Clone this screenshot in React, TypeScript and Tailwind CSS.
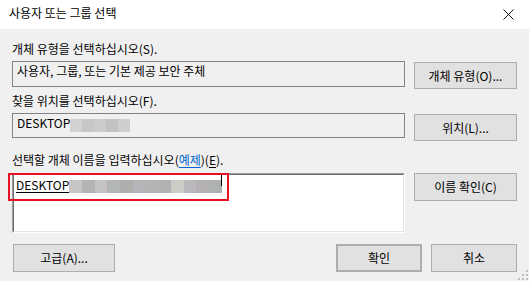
const boxTwoBlur = [
  "bg-[#d2d2d2]",
  "bg-[#c6c6c6]",
  "bg-[#cbcbcb]",
  "bg-[#c2c2c2]",
  "bg-[#cecece]",
];

const boxThreeBlur = [
  "bg-[#c8c6c5]",
  "bg-[#b4b4b4]",
  "bg-[#c4c2c2]",
  "bg-[#b2b6b6]",
  "bg-[#b0aeac]",
  "bg-[#b6b6ba]",
  "bg-[#b4b4b4]",
  "bg-[#b2b2b2]",
  "bg-[#cccbc6]",
  "bg-[#bab8bc]",
  "bg-[#b4b0b4]",
  "bg-[#aeb2b2]",
];

function Button({
  children,
  className = "",
}: {
  children: React.ReactNode;
  className?: string;
}) {
  return (
    <div
      className={`flex items-center justify-center border border-[#adadad] bg-[#e1e1e1] leading-4 ${className}`}
    >
      {children}
    </div>
  );
}

export default function App() {
  return (
    <div className="relative h-[281px] w-[529px] overflow-hidden bg-[#f0f0f0] font-['Noto_Sans_CJK_KR',sans-serif] text-[12px] text-black">
      <div className="flex h-[29px] items-start justify-between bg-white pl-[9px] pr-[15px] pt-[5px]">
        <span className="leading-4">사용자 또는 그룹 선택</span>
        <svg width="11" height="11" viewBox="0 0 11 11" className="mt-[4px]">
          <path d="M0.5 0.5 L10.5 10.5 M10.5 0.5 L0.5 10.5" stroke="#111" strokeWidth="1" />
        </svg>
      </div>

      <div className="flex flex-col px-[12px]">
        <div className="mt-[12px] h-4 leading-4">개체 유형을 선택하십시오(S).</div>
        <div className="mt-[4px] grid grid-cols-[393px_103px] gap-x-[9px]">
          <div className="h-[26px] border border-[#828282] pl-[4px] pt-[1px] leading-4">
            사용자, 그룹, 또는 기본 제공 보안 주체
          </div>
          <Button className="mt-[1px] h-[27px]">개체 유형(O)...</Button>
        </div>

        <div className="mt-[4px] h-4 leading-4">찾을 위치를 선택하십시오(F).</div>
        <div className="mt-[4px] grid grid-cols-[393px_103px] gap-x-[9px]">
          <div className="flex h-[25px] items-start border border-[#828282] pl-[4px] pt-[1px]">
            <span className="leading-4">DESKTOP</span>
            <div className="mt-[4px] flex">
              {boxTwoBlur.map((c, i) => (
                <span key={i} className={`h-[13px] w-[12px] ${c}`} />
              ))}
            </div>
          </div>
          <Button className="mt-[1px] h-[27px]">위치(L)...</Button>
        </div>

        <div className="mt-[11px] h-4 leading-4">
          선택할 개체 이름을 입력하십시오(
          <span className="text-[#0066cc] underline underline-offset-2">예제</span>)(
          <span className="underline underline-offset-2">E</span>).
        </div>
        <div className="mt-[5px] grid grid-cols-[393px_103px] items-start gap-x-[9px]">
          <div className="relative h-[60px] border-b border-l border-r border-t border-b-white border-l-[#a0a0a0] border-r-white border-t-[#a0a0a0]">
            <div className="flex h-full items-start border-b border-l border-r border-t border-b-[#e3e3e3] border-l-[#696969] border-r-[#e3e3e3] border-t-[#696969] bg-white pl-[2px] pt-[2px]">
              <span className="leading-4 underline underline-offset-2">DESKTOP</span>
              <div className="mt-[3px] flex">
                {boxThreeBlur.map((c, i) => (
                  <span key={i} className={`h-[13px] w-[12.7px] ${c}`} />
                ))}
              </div>
              <span className="-ml-[1px] -mt-[2px] h-[11px] w-px bg-black" />
            </div>
            <div className="absolute -left-[5px] -top-[1px] h-[28px] w-[221px] border-2 border-[#e81123]" />
          </div>
          <Button className="h-[28px]">이름 확인(C)</Button>
        </div>

        <div className="mt-[11px] flex">
          <Button className="ml-[1px] h-[28px] w-[102px]">고급(A)...</Button>
          <div className="ml-auto flex gap-x-[9px]">
            <Button className="h-[28px] w-[86px] border-2 border-[#0078d7]">확인</Button>
            <Button className="h-[28px] w-[86px]">취소</Button>
          </div>
        </div>
      </div>

      <svg width="12" height="12" viewBox="0 0 12 12" className="absolute bottom-0 right-0">
        <rect x="9" y="1" width="2" height="2" fill="#bdbdbd" />
        <rect x="5" y="5" width="2" height="2" fill="#bdbdbd" />
        <rect x="9" y="5" width="2" height="2" fill="#bdbdbd" />
        <rect x="1" y="9" width="2" height="2" fill="#bdbdbd" />
        <rect x="5" y="9" width="2" height="2" fill="#bdbdbd" />
        <rect x="9" y="9" width="2" height="2" fill="#bdbdbd" />
      </svg>
    </div>
  );
}
